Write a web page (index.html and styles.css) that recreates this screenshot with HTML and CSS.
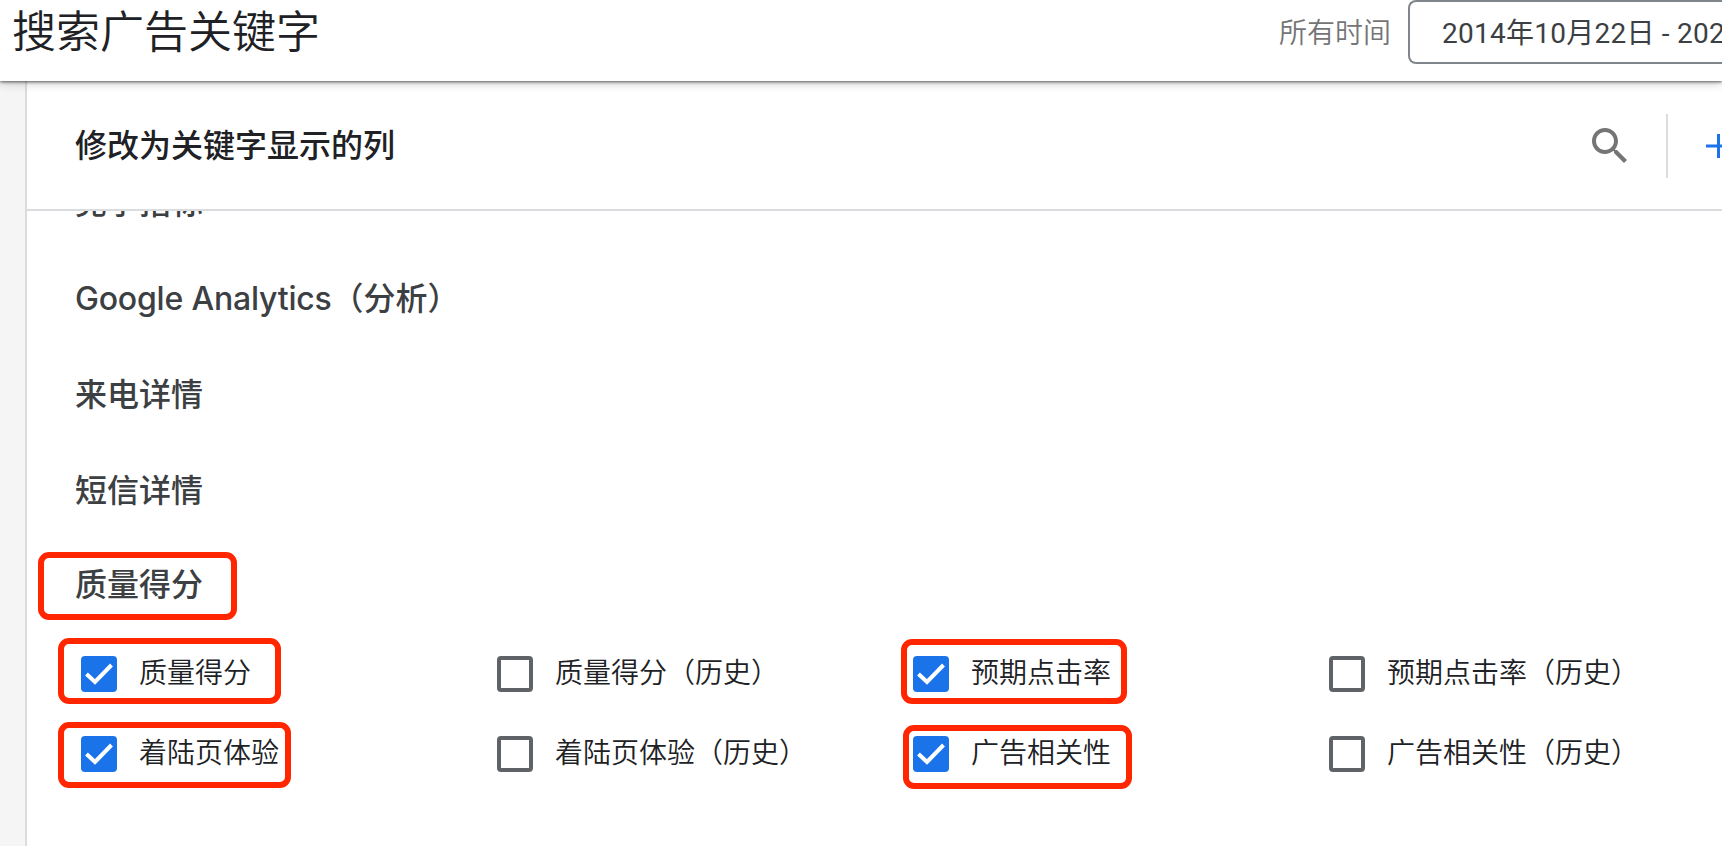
FILE: index.html
```html
<!DOCTYPE html>
<html lang="zh-CN">
<head>
    <meta charset="UTF-8">
    <meta name="viewport" content="width=device-width, initial-scale=1.0">
    <title>搜索广告关键字</title>
    <link rel="stylesheet" href="styles.css">
</head>
<body>
    <header class="topbar">
        <h1 class="page-title">搜索广告关键字</h1>
        <span class="range-label">所有时间</span>
        <button class="date-range">2014年10月22日 - 2021年</button>
    </header>
    <main class="panel">
        <div class="panel-header">
            <h2 class="panel-title">修改为关键字显示的列</h2>
            <svg class="search-icon" viewBox="0 0 24 24"><path d="M15.5 14h-.79l-.28-.27C15.41 12.59 16 11.11 16 9.5 16 5.91 13.09 3 9.5 3S3 5.91 3 9.5 5.91 16 9.5 16c1.61 0 3.09-.59 4.23-1.57l.27.28v.79l5 4.99L20.49 19l-4.99-5zm-6 0C7.01 14 5 11.99 5 9.5S7.01 5 9.5 5 14 7.01 14 9.5 11.99 14 9.5 14z"/></svg>
            <span class="divider"></span>
            <svg class="plus-icon" viewBox="0 0 24 24"><path d="M12.5 0v24M0 12h24"/></svg>
        </div>
        <div class="panel-body">
            <h3 class="section">竞争指标</h3>
            <h3 class="section"><span class="latin">Google Analytics</span>（分析）</h3>
            <h3 class="section">来电详情</h3>
            <h3 class="section">短信详情</h3>
            <h3 class="section section-open">质量得分</h3>
            <div class="columns">
                <label class="column"><span class="box checked"><svg viewBox="0 0 36 36"><path d="M5.5 18L14 26 30.5 9"/></svg></span>质量得分</label>
                <label class="column"><span class="box"></span>质量得分（历史）</label>
                <label class="column"><span class="box checked"><svg viewBox="0 0 36 36"><path d="M5.5 18L14 26 30.5 9"/></svg></span>预期点击率</label>
                <label class="column"><span class="box"></span>预期点击率（历史）</label>
                <label class="column"><span class="box checked"><svg viewBox="0 0 36 36"><path d="M5.5 18L14 26 30.5 9"/></svg></span>着陆页体验</label>
                <label class="column"><span class="box"></span>着陆页体验（历史）</label>
                <label class="column"><span class="box checked"><svg viewBox="0 0 36 36"><path d="M5.5 18L14 26 30.5 9"/></svg></span>广告相关性</label>
                <label class="column"><span class="box"></span>广告相关性（历史）</label>
            </div>
        </div>
    </main>

    <!-- red marks on top of the page -->
    <div class="mark mark-section"></div>
    <div class="mark mark-quality"></div>
    <div class="mark mark-landing"></div>
    <div class="mark mark-ctr"></div>
    <div class="mark mark-relevance"></div>
</body>
</html>
```
FILE: styles.css
```css
* {
    box-sizing: border-box;
}
body {
    margin: 0;
    height: 100vh;
    display: flex;
    flex-direction: column;
    position: relative;
    overflow: hidden;
    background-color: #f5f5f5;
    color: #202124;
    font-family: Roboto, "Noto Sans CJK SC", sans-serif;
}
h1, h2, h3 {
    margin: 0;
}
.topbar {
    flex: none;
    height: 81px;
    padding-left: 12px;
    display: flex;
    align-items: flex-start;
    background-color: #fff;
    box-shadow: 0 1px 3px rgba(0, 0, 0, 0.6), 0 2px 10px rgba(0, 0, 0, 0.2);
    z-index: 1;
}
.page-title {
    flex: 1;
    font-size: 44px;
    font-weight: 350;
    line-height: 67px;
}
.range-label {
    margin-right: 17px;
    font-size: 28px;
    font-weight: 350;
    line-height: 67px;
    color: #757575;
}
.date-range {
    flex: none;
    width: 314px;
    height: 64px;
    padding: 2px 0 0 32px;
    overflow: hidden;
    border: 2px solid #80868b;
    border-right: none;
    border-radius: 8px 0 0 8px;
    background-color: #fff;
    color: #3c4043;
    font-family: inherit;
    font-size: 28px;
    letter-spacing: 0.25px;
    line-height: 60px;
    text-align: left;
    white-space: nowrap;
}
.panel {
    flex: 1;
    min-height: 0;
    margin-left: 25px;
    border-left: 2px solid #dadce0;
    background-color: #fff;
    display: flex;
    flex-direction: column;
}
.panel-header {
    flex: none;
    height: 130px;
    padding: 2px 0 0 48px;
    display: flex;
    align-items: center;
    border-bottom: 2px solid #dadce0;
    overflow: hidden;
}
.panel-title {
    flex: 1;
    font-size: 32px;
    font-weight: 500;
    line-height: 48px;
}
.search-icon {
    width: 48px;
    height: 48px;
    fill: #757575;
}
.divider {
    width: 2px;
    height: 64px;
    margin: 0 38px 0 32px;
    background-color: #dadce0;
}
.plus-icon {
    flex: none;
    width: 24px;
    height: 24px;
    margin-right: -8px;
    stroke: #1a73e8;
    stroke-width: 3;
}
.panel-body {
    flex: 1;
    overflow: hidden;
    padding-left: 48px;
}
.section {
    height: 96px;
    font-size: 32px;
    font-weight: 500;
    line-height: 96px;
    color: #3c4043;
}
.section:first-child {
    margin-top: -56px;
}
.section-open {
    height: 95px;
    line-height: 93px;
}
.latin {
    font-family: Inter, sans-serif;
    letter-spacing: -0.2px;
}
.columns {
    padding-left: 6px;
    display: grid;
    grid-template-columns: repeat(4, 416px);
    grid-auto-rows: 80px;
}
.column {
    display: flex;
    align-items: center;
    gap: 22px;
    font-size: 28px;
    font-weight: 350;
    line-height: 80px;
    white-space: nowrap;
}
.box {
    width: 36px;
    height: 36px;
    border: 4px solid #5f6368;
    border-radius: 4px;
}
.box.checked {
    border: none;
    background-color: #1a73e8;
}
.box svg {
    display: block;
    fill: none;
    stroke: #fff;
    stroke-width: 4;
}
.mark {
    position: absolute;
    z-index: 2;
    border: 6px solid #ff2600;
    border-radius: 11px;
}
.mark-section {
    left: 38px;
    top: 552px;
    width: 199px;
    height: 68px;
}
.mark-quality {
    left: 58px;
    top: 638px;
    width: 223px;
    height: 66px;
}
.mark-landing {
    left: 58px;
    top: 722px;
    width: 233px;
    height: 66px;
}
.mark-ctr {
    left: 901px;
    top: 639px;
    width: 226px;
    height: 65px;
}
.mark-relevance {
    left: 903px;
    top: 725px;
    width: 229px;
    height: 64px;
}
```
